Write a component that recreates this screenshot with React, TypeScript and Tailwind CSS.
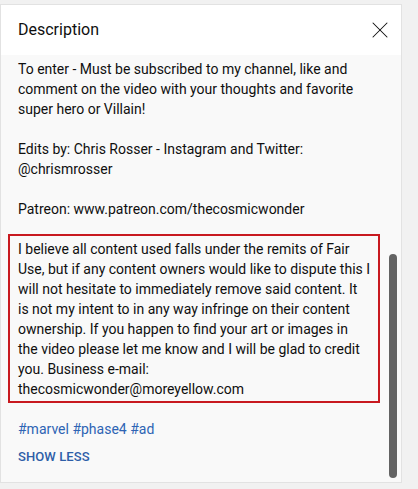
import { X } from "lucide-react";

export default function App() {
  return (
    <div className="w-[418px] h-[489px] bg-[#f1f1f1] pt-[4px] overflow-hidden font-['Roboto',sans-serif]">
      <div className="w-[402px] h-[479px] border border-[#e2e2e2] bg-[#f9f9f9] flex flex-col">
        {/* Header */}
        <div className="h-[50px] bg-white flex items-center justify-between pl-[17px] pr-[7px]">
          <h2 className="text-[16px] text-[#0f0f0f]">Description</h2>
          <button className="w-[28px] h-[28px] flex items-center justify-center text-[#0f0f0f]">
            <X size={28} strokeWidth={0.9} />
          </button>
        </div>

        {/* Body */}
        <div className="flex-1 flex">
          <div className="flex-1 pl-[17px] pt-[4px] text-[14px] leading-[20px] text-[#0f0f0f]">
            <p className="w-[356px]">
              To enter - Must be subscribed to my channel, like and comment on the video with your thoughts and favorite super hero or Villain!
            </p>
            <p className="w-[356px] mt-[20px]">
              Edits by: Chris Rosser - Instagram and Twitter: @chrismrosser
            </p>
            <p className="w-[356px] mt-[20px]">
              Patreon: www.patreon.com/thecosmicwonder
            </p>
            <div className="w-[372px] -ml-[10px] mt-[15px] border-2 border-[#c8191f] pl-[8px] pt-[3px] pb-[2px]">
              <p className="whitespace-nowrap">
                I believe all content used falls under the remits of Fair
                <br />
                Use, but if any content owners would like to dispute this I
                <br />
                will not hesitate to immediately remove said content. It
                <br />
                is not my intent to in any way infringe on their content
                <br />
                ownership. If you happen to find your art or images in
                <br />
                the video please let me know and I will be glad to credit
                <br />
                you. Business e-mail:
                <br />
                thecosmicwonder@moreyellow.com
              </p>
            </div>
            <p className="mt-[16px] text-[#2e64b4]">
              <a>#marvel</a> <a>#phase4</a> <a>#ad</a>
            </p>
            <button className="mt-[8px] text-[13px] font-medium leading-[20px] text-[#2e5ea8] tracking-[0.1px]">
              SHOW LESS
            </button>
          </div>

          {/* Scrollbar */}
          <div className="w-[16px] flex justify-center">
            <div className="mt-[199px] w-[8px] h-[224px] rounded-full bg-[#636363]" />
          </div>
        </div>
      </div>
    </div>
  );
}
